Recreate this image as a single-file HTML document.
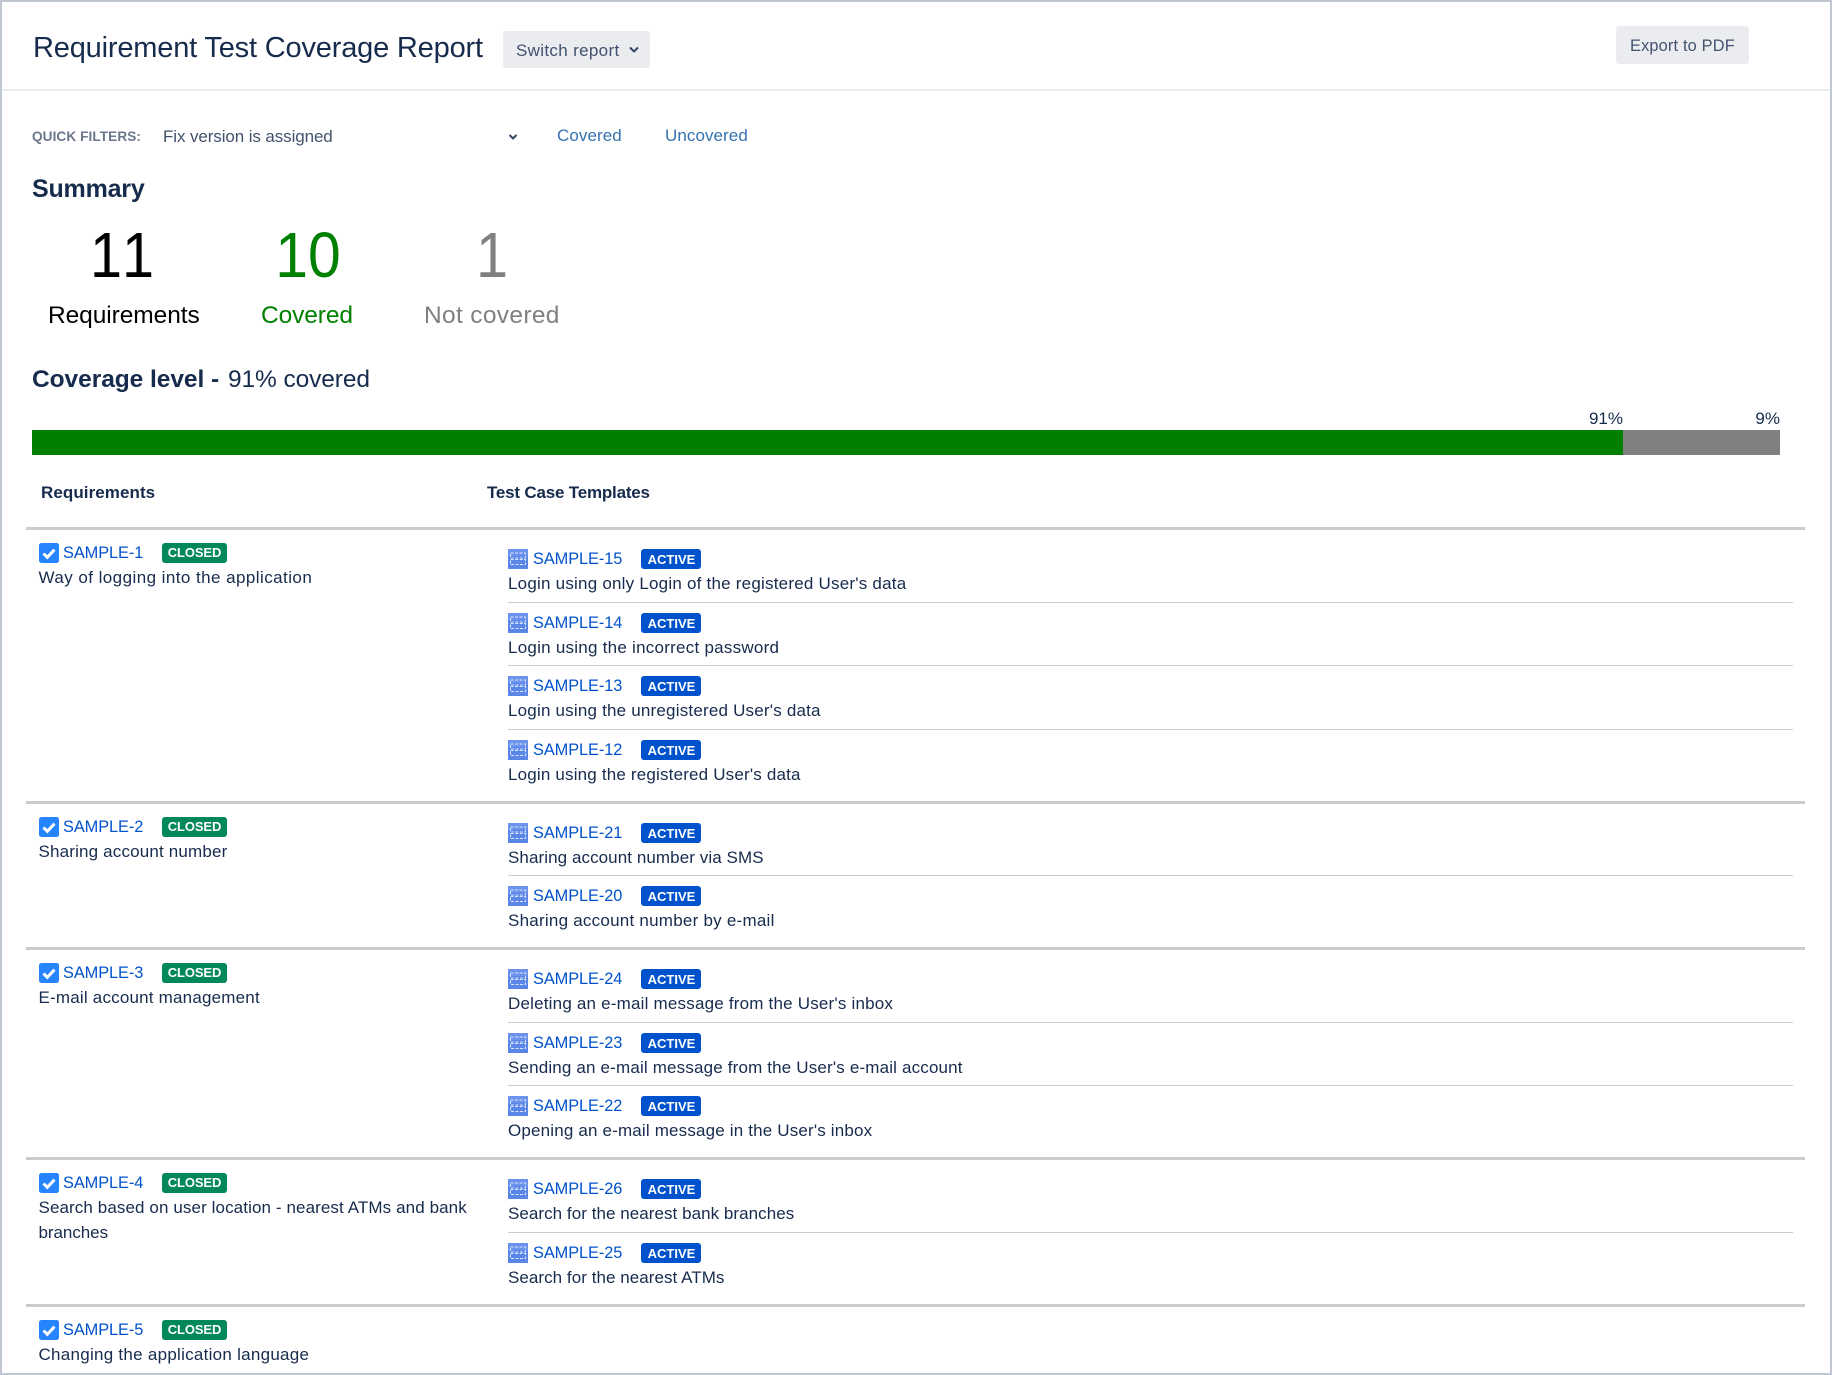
<!DOCTYPE html>
<html lang="en"><head><meta charset="utf-8"><title>Requirement Test Coverage Report</title>
<style>
html,body{margin:0;padding:0;background:#fff}
body{position:relative;width:1832px;height:1375px;overflow:hidden;font-family:"Liberation Sans",Arial,sans-serif;color:#172b4d}
.f{position:absolute;left:0;top:0;width:1832px;height:1375px;box-sizing:border-box;border:2px solid #c1c7d0;pointer-events:none}
.a{position:absolute;white-space:nowrap;line-height:20px}
.r{position:absolute;background:#ccc}
.k{left:26px;width:1779px;height:3px}
.d{left:508px;width:1285px;height:1px}
.btn{position:absolute;background:#ebecf0;border-radius:3px}
.s{position:absolute;width:20px;height:20px}
.l{color:#0052cc;font-size:16.35px;letter-spacing:-.07px}
.t{font-size:17px;letter-spacing:.2px;color:#172b4d}
.b{position:absolute;height:20px;color:#fff;font-weight:700;font-size:13px;text-align:center;border-radius:3px}
.c{width:65px;background:#00875a;left:162px;line-height:20px;letter-spacing:-.1px}
.v{width:60px;background:#0052cc;left:641px;line-height:22px;text-indent:1px}
.h{font-weight:700;font-size:17px;color:#172b4d}
</style></head><body>
<svg width="0" height="0" style="position:absolute"><defs>
<symbol id="chk" viewBox="0 0 20 20"><rect width="20" height="20" rx="2.5" fill="#2684ff"/><path d="M4.500 10.500l3.800 3.800 7.200-7.600" fill="none" stroke="#fff" stroke-width="3"/></symbol>
<symbol id="tpl" viewBox="0 0 20 20"><rect width="20" height="20" fill="#5a86e8"/><rect x="0" y="0" width="20" height="7" fill="#7ea0f0" opacity=".5"/><g fill="none" stroke="#dbe5fb" stroke-width="1" stroke-dasharray="3 1.500"><rect x="2.500" y="4" width="15" height="5"/><rect x="2.500" y="10.500" width="15" height="5"/></g></symbol>
<pattern id="dots" width="8" height="8" patternUnits="userSpaceOnUse"><rect width="8" height="8" fill="#808080"/><rect x="2" y="2" width="1" height="1" fill="#737373"/><rect x="6" y="6" width="1" height="1" fill="#737373"/></pattern>
</defs></svg>

<div class="a" style="left:33px;top:33px;line-height:30px;font-size:29px;letter-spacing:-.18px;color:#172b4d">Requirement Test Coverage Report</div>
<div class="btn" style="left:503px;top:31px;width:147px;height:37px"></div>
<div class="a" style="left:516px;top:41px;font-size:17px;color:#42526e;letter-spacing:.33px">Switch report</div>
<svg class="s" style="left:624px;top:40px" viewBox="0 0 20 20"><path d="M6 7.500l4 4 4-4" fill="none" stroke="#344563" stroke-width="2"/></svg>
<div class="btn" style="left:1616px;top:26px;width:133px;height:38px"></div>
<div class="a" style="left:1630px;top:36px;font-size:16.35px;color:#42526e;letter-spacing:.17px">Export to PDF</div>
<div class="r" style="left:2px;top:89px;width:1828px;height:2px;background:#ebecf0"></div>

<div class="a" style="left:32px;top:127px;font-size:13.6px;font-weight:700;color:#6b778c;letter-spacing:.09px">QUICK FILTERS:</div>
<div class="a" style="left:163px;top:127px;font-size:17px;color:#42526e;letter-spacing:-.1px">Fix version is assigned</div>
<svg class="s" style="left:503px;top:127px" viewBox="0 0 20 20"><path d="M6.500 8l3.500 3.500L13.500 8" fill="none" stroke="#344563" stroke-width="2"/></svg>
<div class="a" style="left:557px;top:126px;font-size:17px;color:#3572b0;letter-spacing:.07px">Covered</div>
<div class="a" style="left:665px;top:126px;font-size:17px;color:#3572b0;letter-spacing:.07px">Uncovered</div>

<div class="a" style="left:32px;top:177px;line-height:24px;font-size:25px;font-weight:700;letter-spacing:-.2px">Summary</div>
<div class="a" style="left:62px;width:120px;text-align:center;top:220px;line-height:70px;font-size:64px;color:#000;font-kerning:none;transform:scaleX(.9)">11</div>
<div class="a" style="left:248px;width:120px;text-align:center;top:220px;line-height:70px;font-size:64px;color:#008000;transform:scaleX(.92)">10</div>
<div class="a" style="left:432px;width:120px;text-align:center;top:220px;line-height:70px;font-size:64px;color:#808080;transform:scaleX(.9)">1</div>
<div class="a" style="left:48px;top:302px;line-height:28px;font-size:24.5px;color:#000;letter-spacing:-.07px">Requirements</div>
<div class="a" style="left:261px;top:302px;line-height:28px;font-size:24.5px;color:#008000;letter-spacing:-.1px">Covered</div>
<div class="a" style="left:424px;top:302px;line-height:28px;font-size:24.5px;color:#808080;letter-spacing:.33px">Not covered</div>
<div class="a" style="left:32px;top:366px;line-height:28px;font-size:24.5px;letter-spacing:-.05px;font-weight:700">Coverage level -</div>
<div class="a" style="left:228px;top:366px;line-height:28px;font-size:24.5px;letter-spacing:-.1px">91% covered</div>

<div class="a t" style="left:1523px;width:100px;text-align:right;top:409px;letter-spacing:0">91%</div>
<div class="a t" style="left:1680px;width:100px;text-align:right;top:409px;letter-spacing:0">9%</div>
<div class="r" style="left:32px;top:430px;width:1591px;height:25px;background:#008000"></div>
<svg style="position:absolute;left:1623px;top:430px" width="157" height="25"><rect width="157" height="25" fill="url(#dots)"/></svg>

<div class="a h" style="left:41px;top:483px;letter-spacing:.07px">Requirements</div>
<div class="a h" style="left:487px;top:483px;letter-spacing:-.2px">Test Case Templates</div>

<div class="r k" style="top:527px"></div>
<svg class="s" style="left:39px;top:543px"><use href="#chk"/></svg><div class="a l" style="left:63px;top:543px">SAMPLE-1</div><div class="b c" style="top:543px">CLOSED</div><div class="a t" style="left:38.500px;top:568px;letter-spacing:.44px">Way of logging into the application</div>
<svg class="s" style="left:508px;top:549px"><use href="#tpl"/></svg><div class="a l" style="left:533px;top:549px">SAMPLE-15</div><div class="b v" style="top:549px">ACTIVE</div><div class="a t" style="left:508px;top:574px;letter-spacing:.22px">Login using only Login of the registered User's data</div>
<div class="r d" style="top:602px"></div>
<svg class="s" style="left:508px;top:613px"><use href="#tpl"/></svg><div class="a l" style="left:533px;top:613px">SAMPLE-14</div><div class="b v" style="top:613px">ACTIVE</div><div class="a t" style="left:508px;top:638px;letter-spacing:.25px">Login using the incorrect password</div>
<div class="r d" style="top:665px"></div>
<svg class="s" style="left:508px;top:676px"><use href="#tpl"/></svg><div class="a l" style="left:533px;top:676px">SAMPLE-13</div><div class="b v" style="top:676px">ACTIVE</div><div class="a t" style="left:508px;top:701px;letter-spacing:.2px">Login using the unregistered User's data</div>
<div class="r d" style="top:729px"></div>
<svg class="s" style="left:508px;top:740px"><use href="#tpl"/></svg><div class="a l" style="left:533px;top:740px">SAMPLE-12</div><div class="b v" style="top:740px">ACTIVE</div><div class="a t" style="left:508px;top:765px;letter-spacing:.18px">Login using the registered User's data</div>

<div class="r k" style="top:801px"></div>
<svg class="s" style="left:39px;top:817px"><use href="#chk"/></svg><div class="a l" style="left:63px;top:817px">SAMPLE-2</div><div class="b c" style="top:817px">CLOSED</div><div class="a t" style="left:38.500px;top:842px;letter-spacing:.17px">Sharing account number</div>
<svg class="s" style="left:508px;top:823px"><use href="#tpl"/></svg><div class="a l" style="left:533px;top:823px">SAMPLE-21</div><div class="b v" style="top:823px">ACTIVE</div><div class="a t" style="left:508px;top:848px;letter-spacing:.08px">Sharing account number via SMS</div>
<div class="r d" style="top:875px"></div>
<svg class="s" style="left:508px;top:886px"><use href="#tpl"/></svg><div class="a l" style="left:533px;top:886px">SAMPLE-20</div><div class="b v" style="top:886px">ACTIVE</div><div class="a t" style="left:508px;top:911px;letter-spacing:.24px">Sharing account number by e-mail</div>

<div class="r k" style="top:947px"></div>
<svg class="s" style="left:39px;top:963px"><use href="#chk"/></svg><div class="a l" style="left:63px;top:963px">SAMPLE-3</div><div class="b c" style="top:963px">CLOSED</div><div class="a t" style="left:38.500px;top:988px;letter-spacing:.2px">E-mail account management</div>
<svg class="s" style="left:508px;top:969px"><use href="#tpl"/></svg><div class="a l" style="left:533px;top:969px">SAMPLE-24</div><div class="b v" style="top:969px">ACTIVE</div><div class="a t" style="left:508px;top:994px;letter-spacing:.2px">Deleting an e-mail message from the User's inbox</div>
<div class="r d" style="top:1022px"></div>
<svg class="s" style="left:508px;top:1033px"><use href="#tpl"/></svg><div class="a l" style="left:533px;top:1033px">SAMPLE-23</div><div class="b v" style="top:1033px">ACTIVE</div><div class="a t" style="left:508px;top:1058px;letter-spacing:.165px">Sending an e-mail message from the User's e-mail account</div>
<div class="r d" style="top:1085px"></div>
<svg class="s" style="left:508px;top:1096px"><use href="#tpl"/></svg><div class="a l" style="left:533px;top:1096px">SAMPLE-22</div><div class="b v" style="top:1096px">ACTIVE</div><div class="a t" style="left:508px;top:1121px;letter-spacing:.17px">Opening an e-mail message in the User's inbox</div>

<div class="r k" style="top:1157px"></div>
<svg class="s" style="left:39px;top:1173px"><use href="#chk"/></svg><div class="a l" style="left:63px;top:1173px">SAMPLE-4</div><div class="b c" style="top:1173px">CLOSED</div><div class="a t" style="left:38.500px;top:1198px;letter-spacing:.1px">Search based on user location - nearest ATMs and bank</div><div class="a t" style="left:38.500px;top:1223px;letter-spacing:-.05px">branches</div>
<svg class="s" style="left:508px;top:1179px"><use href="#tpl"/></svg><div class="a l" style="left:533px;top:1179px">SAMPLE-26</div><div class="b v" style="top:1179px">ACTIVE</div><div class="a t" style="left:508px;top:1204px;letter-spacing:.05px">Search for the nearest bank branches</div>
<div class="r d" style="top:1232px"></div>
<svg class="s" style="left:508px;top:1243px"><use href="#tpl"/></svg><div class="a l" style="left:533px;top:1243px">SAMPLE-25</div><div class="b v" style="top:1243px">ACTIVE</div><div class="a t" style="left:508px;top:1268px;letter-spacing:.05px">Search for the nearest ATMs</div>

<div class="r k" style="top:1304px"></div>
<svg class="s" style="left:39px;top:1320px"><use href="#chk"/></svg><div class="a l" style="left:63px;top:1320px">SAMPLE-5</div><div class="b c" style="top:1320px">CLOSED</div><div class="a t" style="left:38.500px;top:1345px;letter-spacing:.27px">Changing the application language</div>
<div class="f"></div>
</body></html>
